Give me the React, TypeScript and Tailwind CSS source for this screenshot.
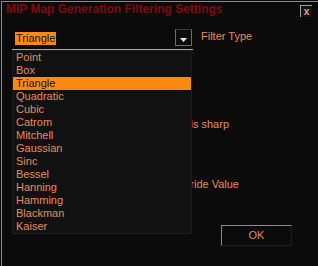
const FILTERS = [
  "Point",
  "Box",
  "Triangle",
  "Quadratic",
  "Cubic",
  "Catrom",
  "Mitchell",
  "Gaussian",
  "Sinc",
  "Bessel",
  "Hanning",
  "Hamming",
  "Blackman",
  "Kaiser",
];

const selected = "Triangle";

function ComboBox() {
  return (
    <div className="ml-[10px] flex h-[21px] w-[181px] items-start justify-between border-b border-[#a8a8a8]">
      <span className="ml-[3px] mt-[3px] inline-block h-[13px] bg-[#fb8a12] px-px text-[11px] leading-[13px] text-[#1a1006]">
        {selected}
      </span>
      <div className="mr-px flex h-[17px] w-[17px] items-center justify-center border border-[#6c6c6c] border-t-[#3a3a3a]">
        <svg width="7" height="4" viewBox="0 0 7 4" className="mt-[4px]">
          <path d="M0 0h7L3.5 4z" fill="#e8e8e8" />
        </svg>
      </div>
    </div>
  );
}

function DropList() {
  return (
    <div className="absolute left-[10px] top-[48px] w-[180px] border border-[#1c1c1c] bg-[#111111]">
      {FILTERS.map((name) => (
        <div
          key={name}
          className={
            name === selected
              ? "h-[13px] bg-[#fb8a12] pl-[3px] text-[11px] leading-[13px] text-[#1a1006]"
              : "h-[13px] pl-[3px] text-[11px] leading-[13px] text-[#e68c58]"
          }
        >
          {name}
        </div>
      ))}
    </div>
  );
}

export default function App() {
  return (
    <div className="h-[266px] w-[318px] overflow-hidden bg-[#0b0b0b] pl-px pt-px font-['Liberation_Sans',Arial,sans-serif]">
      <div className="relative flex h-full flex-col border-l border-t border-[#8c8c8c]">
        <div className="flex items-start justify-between">
          <div className="pl-[4px] text-[12px] font-bold leading-[14px] text-[#7e0c0c]">
            MIP Map Generation Filtering Settings
          </div>
          <div className="mr-[6px] mt-[3px] flex h-[12px] w-[12px] items-center justify-center border-l border-t border-[#a0a0a0] bg-[#141414] text-[10px] font-bold leading-none text-[#f0a08c]">
            x
          </div>
        </div>

        <div className="mt-[12px] flex items-start">
          <ComboBox />
          <span className="ml-[8px] mt-px text-[11px] leading-[13px] text-[#e68c58]">Filter Type</span>
        </div>

        <div className="mt-[68px] flex w-[227px] justify-end text-[11px] leading-[13px] text-[#e68c58]">
          Kernel is sharp
        </div>
        <div className="mt-[47px] flex w-[237px] justify-end text-[11px] leading-[13px] text-[#e68c58]">
          Override Value
        </div>

        <button
          type="button"
          className="ml-[219px] mt-[34px] h-[21px] w-[71px] border border-b-[#1e1e1e] border-l-[#8c8c8c] border-r-[#1e1e1e] border-t-[#8c8c8c] bg-[#0b0b0b] text-[11px] leading-[13px] text-[#e08672]"
        >
          OK
        </button>

        <DropList />
      </div>
    </div>
  );
}
